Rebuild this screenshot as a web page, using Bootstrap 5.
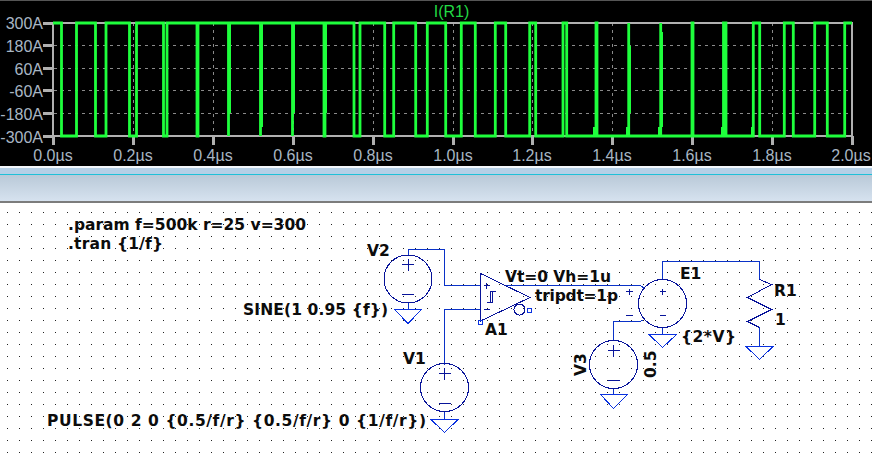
<!DOCTYPE html>
<html lang="en"><head><meta charset="utf-8"><title>LTspice</title>
<link href="https://cdn.jsdelivr.net/npm/bootstrap@5.3.0/dist/css/bootstrap.min.css" rel="stylesheet">
<style>
html,body{width:872px;height:456px;overflow:hidden;background:#fff}
.app-shell{width:872px;height:456px}
.plot-pane{height:166px;background:#000;border-top:1px solid #555;flex:none}
.plot-svg,.sch-svg{display:block}
.title-strip{height:9px;background:#b5cfe6;border-top:2px solid #f4f8fc;border-bottom:1px solid #1fc0d8;flex:none}
.title-band{height:28px;background:linear-gradient(#b9c9d8,#d6e2ef);border-bottom:2px solid #7c7c7c;flex:none}
.sch-pane{flex:1 1 auto;background:#fff;min-height:0}
.ax{font-family:"Liberation Sans",sans-serif;font-size:16px;fill:#a8b6c4}
.trc{font-family:"Liberation Sans",sans-serif;font-size:16px;fill:#22d844}
.lbl{font-family:"DejaVu Sans",sans-serif;font-weight:700;font-size:15.5px;fill:#0c0c0c}
</style></head>
<body>
<div class="app-shell d-flex flex-column">
<div class="plot-pane">
<svg class="plot-svg" width="872" height="165" viewBox="0 1 872 165">
<g stroke="#8a8a8a" stroke-dasharray="3 4" fill="none">
<path d="M54 45.5H851M54 68.5H851M54 90.5H851M54 113.5H851"/>
<path d="M133.5 23V136M213.5 23V136M293.5 23V136M373.5 23V136M453.5 23V136M532.5 23V136M612.5 23V136M692.5 23V136M772.5 23V136"/>
</g>
<g stroke="#b0b0b0" stroke-width="2" fill="none" shape-rendering="crispEdges">
<path d="M53 23H852V136H53Z"/>
<path d="M43 23H53M43 45H53M43 68H53M43 90H53M43 113H53M43 136H53" stroke-width="3"/>
<path d="M53.5 136V145M133.5 136V145M213.5 136V145M293.5 136V145M373.5 136V145M453.5 136V145M532.5 136V145M612.5 136V145M692.5 136V145M772.5 136V145M852.5 136V145" stroke-width="3"/>
</g>
<g class="ax" text-anchor="end">
<text x="43" y="29">300A</text><text x="43" y="52">180A</text><text x="43" y="75">60A</text><text x="43" y="97">-60A</text><text x="43" y="120">-180A</text><text x="43" y="143">-300A</text>
</g>
<g class="ax" text-anchor="middle">
<text x="53" y="161">0.0µs</text><text x="133" y="161">0.2µs</text><text x="213" y="161">0.4µs</text><text x="293" y="161">0.6µs</text><text x="373" y="161">0.8µs</text><text x="453" y="161">1.0µs</text><text x="532" y="161">1.2µs</text><text x="612" y="161">1.4µs</text><text x="692" y="161">1.6µs</text><text x="772" y="161">1.8µs</text><text x="851" y="161">2.0µs</text>
</g>
<text class="trc" x="451.5" y="17" text-anchor="middle">I(R1)</text>
<g fill="none" stroke="#1eff3c" stroke-width="2.8">
<path d="M53 23H61.5V136H76.5V23H95.5V136H106V23H129.5V136H136.5V23H163.5V136H167V23H197V136H198V23H228.5V136V23H260.5V136V23H292.5V136V23H324V136H325V23H354V136H360V23H384.7V136H393.7V23H415.7V136H427.3V23H445.7V136H461.3V23H475.3V136H495.3V23H505.7V136H529.7V23H535.7V136H563V23H566.7V136H596V23H597V136H628.7V23V136H660.7V23V136H692V23H693V136H723.5V23H726V136H753.3V23H759.7V136H784.3V23H793.3V136H814.7V23H827.3V136H844.7V23H852"/>
</g>
<g fill="#1eff3c" shape-rendering="crispEdges">
<rect x="229" y="23" width="2" height="90"/><rect x="261" y="23" width="2" height="104"/><rect x="293" y="23" width="2" height="90"/><rect x="325" y="23" width="2" height="90"/>
<rect x="593" y="127" width="2" height="9"/><rect x="626" y="127" width="2" height="9"/><rect x="630" y="46" width="1" height="67"/><rect x="662" y="32" width="1" height="95"/><rect x="658" y="127" width="2" height="9"/><rect x="721" y="127" width="2" height="9"/><rect x="751" y="127" width="2" height="9"/>
</g>
</svg>
</div>
<div class="title-strip"></div>
<div class="title-band"></div>
<div class="sch-pane">
<svg class="sch-svg" width="872" height="253" viewBox="0 203 872 253">
<defs><pattern id="dots" x="7" y="212" width="12" height="12" patternUnits="userSpaceOnUse"><rect width="1" height="1" fill="#222"/></pattern></defs>
<rect x="0" y="203" width="872" height="253" fill="url(#dots)"/>
<g fill="none" stroke="#0a32c8" stroke-width="1" shape-rendering="crispEdges">
<path d="M408 256V249.5H444.5V285.5H480"/>
<path d="M408 303V309"/>
<path d="M480 309.5H444.5V365"/>
<path d="M444.5 411V419"/>
<path d="M505 285.5H640L644 288"/>
<path d="M662.5 279V261.5H759.5V279"/>
<path d="M759.5 327V347"/>
<path d="M662.5 327V334"/>
<path d="M643 320L640 321.5H613.5V341"/>
<path d="M613.5 388V394"/>
</g>
<g fill="none" stroke="#08149a" stroke-width="1" shape-rendering="crispEdges">
<circle cx="408" cy="279" r="24"/><circle cx="444.5" cy="387.5" r="24"/><circle cx="662.5" cy="303.5" r="24"/><circle cx="613.5" cy="364.5" r="24"/>
<path d="M402 264.5H414M408 258.5V270.5M402 294.5H414"/>
<path d="M438.5 373.5H450.5M444.5 367.5V379.5M438.5 403.5H450.5"/>
<path d="M607.5 350.5H619.5M613.5 344.5V356.5M607.5 380.5H619.5"/>
<path d="M659.5 291.5H665.5M662.5 288.5V294.5M659.5 315.5H665.5"/>
<path d="M626 291.5H632.5M629.5 288.5V294.5M626 315.5H632.5"/>
<path d="M480.5 273.5V321L530 297.5Z"/>
<path d="M483.5 285.5H489.5M486.5 282.5V288.5M483.5 309.5H489.5"/>
<path d="M486.5 302.5H492.5V291.5H495.5M490 302.5V291.5H495.5"/>
<circle cx="519.5" cy="309.5" r="5.5"/>
<path d="M759.5 279.5L771.5 284.5L747.5 297.5L771.5 309.5L747.5 321.5L759.5 327.5"/>
</g>
<g fill="none" stroke="#0a32e0" stroke-width="1" shape-rendering="crispEdges">
<rect x="478.5" y="320.5" width="4" height="4"/><rect x="527.5" y="308.5" width="4" height="4"/>
<path d="M394.5 309.5H421.5L408 323.5Z"/>
<path d="M431 419.5H458L444.5 432.5Z"/>
<path d="M649 334.5H676.5L662.5 347.5Z"/>
<path d="M600.5 394.5H627.5L613.5 408.5Z"/>
<path d="M746 346.5H773L759.5 359.5Z"/>
</g>
<g class="lbl">
<text x="68" y="230" textLength="238">.param f=500k r=25 v=300</text>
<text x="68" y="249" textLength="95">.tran {1/f}</text>
<text x="367" y="256">V2</text>
<text x="243" y="315" textLength="145">SINE(1 0.95 {f})</text>
<text x="403" y="364">V1</text>
<text x="47" y="426" textLength="379">PULSE(0 2 0 {0.5/f/r} {0.5/f/r} 0 {1/f/r})</text>
<text x="485" y="335">A1</text>
<text x="505" y="282" textLength="106">Vt=0 Vh=1u</text>
<text x="535" y="301" textLength="83">tripdt=1p</text>
<text x="680" y="279">E1</text>
<text x="681" y="342" textLength="55">{2*V}</text>
<text x="774" y="296">R1</text>
<text x="775" y="325">1</text>
<text transform="translate(586 376) rotate(-90)">V3</text>
<text transform="translate(656 378) rotate(-90)">0.5</text>
</g>
</svg>
</div>
</div>
<script src="https://cdn.jsdelivr.net/npm/bootstrap@5.3.0/dist/js/bootstrap.bundle.min.js"></script>
</body></html>
